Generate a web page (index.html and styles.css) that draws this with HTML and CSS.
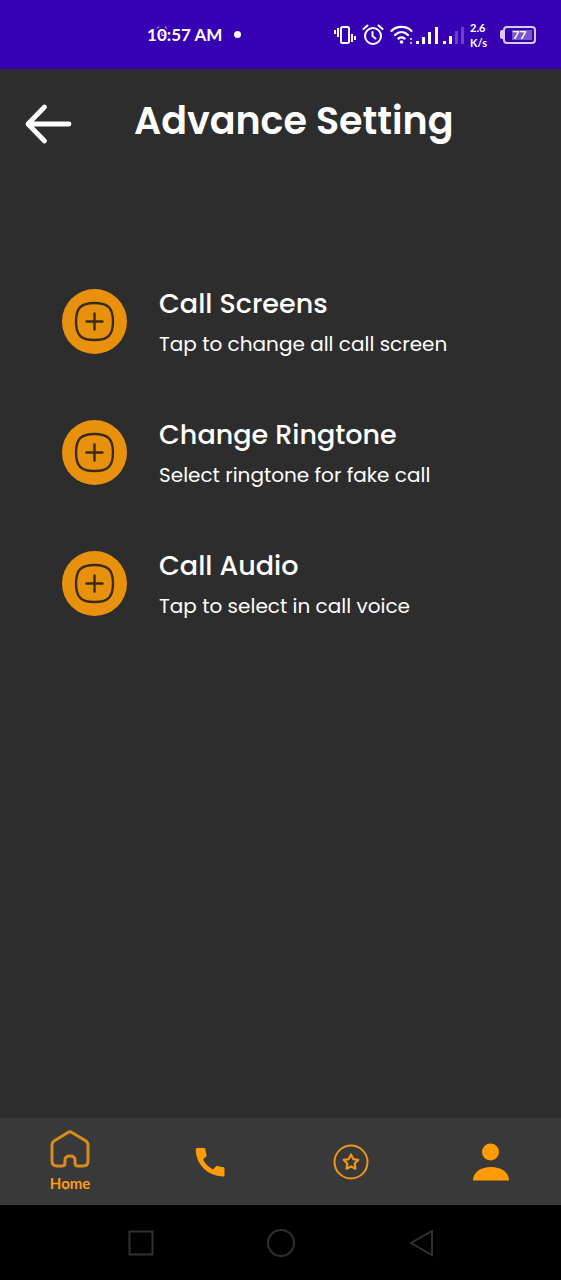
FILE: index.html
```
<!DOCTYPE html>
<html lang="en">
<head>
<meta charset="utf-8">
<meta name="viewport" content="width=device-width, initial-scale=1">
<title>Advance Setting</title>
<link rel="stylesheet" href="styles.css">
</head>
<body>
<div class="status-bar">
  <div class="status-time">
    <span class="clock-text">1<span class="marked">0<svg class="clock-mark" viewBox="0 0 10 20" aria-hidden="true"><path d="M0 4l2-2M10 4L8 2M5 8v3h2"/></svg></span>:57 AM</span>
    <span class="status-dot"></span>
  </div>
  <div class="status-icons">
    <svg width="22" height="20" viewBox="0 0 22 20" aria-hidden="true"><g fill="none" stroke="#fff" stroke-width="2"><rect x="7" y="2" width="8" height="16" rx="1.5"/><path d="M4 3v9M1 5v4M18 9v8M21 11v4"/></g></svg>
    <svg width="22" height="22" viewBox="0 0 22 22" aria-hidden="true"><g fill="none" stroke="#fff" stroke-width="2" stroke-linecap="round"><circle cx="11" cy="12" r="8"/><path d="M1.500 5l4-3.500M20.500 5l-4-3.500M10.500 8v4l3 2.500"/></g></svg>
    <svg class="wifi" width="24" height="20" viewBox="0 0 24 20" aria-hidden="true"><g fill="none" stroke="#fff" stroke-width="2.200" stroke-linecap="round"><path d="M1.500 6c5-5.500 15-5.500 20 0M5 10c4-4 9-4 13 0M8.500 13.500c2-1.500 4-1.500 6 0"/></g><circle cx="11.500" cy="17" r="1.800" fill="#fff"/><path d="M20 13h2v2h-2zM20 17h2v2h-2z" fill="#c3adeb"/></svg>
    <svg width="48" height="18" viewBox="0 0 48 18" aria-hidden="true"><path d="M0 15h3v3H0zM6 11h3v7H6zM12 6h3v12h-3zM19 1h3v17h-3zM27 15h3v3h-3zM33 10h3v8h-3z" fill="#fff"/><path d="M39 5h3v13h-3zM45 1h3v17h-3z" fill="#6c42c8"/></svg>
    <span class="net-speed"><span>2.6</span><span>K/s</span></span>
    <span class="battery"><span class="battery-body"><span class="battery-level">77</span></span></span>
  </div>
</div>

<header class="app-header">
  <button class="back" type="button" aria-label="Back">
    <svg width="48" height="42" viewBox="0 0 48 42" aria-hidden="true"><path d="M20.500 4L4 21l16.500 17M4 21h41" fill="none" stroke="#fff" stroke-width="4.800" stroke-linecap="round" stroke-linejoin="round"/></svg>
  </button>
  <h1>Advance Setting</h1>
</header>

<main class="settings">
  <button class="setting" type="button">
    <svg class="plus" viewBox="0 0 65 65" aria-hidden="true"><circle cx="32.500" cy="32.500" r="32.500"/><path d="M32.500 14C46 14 51 19 51 32.500S46 51 32.500 51 14 46 14 32.500 19 14 32.500 14zM24.500 32.500h16M32.500 24.500v16"/></svg>
    <span class="setting-text"><span class="setting-title">Call Screens</span><span class="setting-note">Tap to change all call screen</span></span>
  </button>
  <button class="setting" type="button">
    <svg class="plus" viewBox="0 0 65 65" aria-hidden="true"><circle cx="32.500" cy="32.500" r="32.500"/><path d="M32.500 14C46 14 51 19 51 32.500S46 51 32.500 51 14 46 14 32.500 19 14 32.500 14zM24.500 32.500h16M32.500 24.500v16"/></svg>
    <span class="setting-text"><span class="setting-title">Change Ringtone</span><span class="setting-note">Select ringtone for fake call</span></span>
  </button>
  <button class="setting" type="button">
    <svg class="plus" viewBox="0 0 65 65" aria-hidden="true"><circle cx="32.500" cy="32.500" r="32.500"/><path d="M32.500 14C46 14 51 19 51 32.500S46 51 32.500 51 14 46 14 32.500 19 14 32.500 14zM24.500 32.500h16M32.500 24.500v16"/></svg>
    <span class="setting-text"><span class="setting-title">Call Audio</span><span class="setting-note">Tap to select in call voice</span></span>
  </button>
</main>

<nav class="tabs">
  <a class="tab" href="#home">
    <svg width="40" height="38" viewBox="0 0 40 38" aria-hidden="true"><path d="M18 2.500L4 11Q2 12.500 2 15v16q0 5 5 5h5q3 0 3-3v-3q0-4 5-4t5 4v3q0 3 3 3h5q5 0 5-5V15q0-2.500-2-4L22 2.500Q20 1.200 18 2.500z" fill="none" stroke="#d98b1c" stroke-width="3" stroke-linejoin="round"/></svg>
    <span class="tab-label">H<span class="marked">o<svg class="o-mark" viewBox="0 0 10 20" aria-hidden="true"><path d="M5 14v4"/></svg></span>me</span>
  </a>
  <a class="tab" href="#calls" aria-label="Calls">
    <svg width="30" height="30" viewBox="0 0 30 30" aria-hidden="true"><path d="M2 1h7q1.300 0 1.500 1.500.2 3 1 5.300.4 1-.4 1.800L8 12.500q3.500 6.500 10 10l3-3.200q.8-.8 1.800-.4 2.300.8 5.200 1 1.500.2 1.500 1.500V28q0 1.500-1.500 1.500Q16.500 29 8.500 21.500 1 13.500.6 2.500.6 1 2 1z" fill="#ff9b05"/></svg>
  </a>
  <a class="tab" href="#favorites" aria-label="Favorites">
    <svg width="36" height="36" viewBox="0 0 36 36" aria-hidden="true"><g fill="none" stroke="#ee961a" stroke-linejoin="round"><circle cx="18" cy="18" r="16.500" stroke-width="2"/><path d="M18 10.500l2.300 4.600 5 .8-3.600 3.600.7 5.200L18 22.500l-4.400 2.200.7-5.200-3.600-3.600 5-.8z" stroke-width="2.200"/></g></svg>
  </a>
  <a class="tab" href="#profile" aria-label="Profile">
    <svg width="36" height="38" viewBox="0 0 36 38" aria-hidden="true"><g fill="#ff9b05"><circle cx="17.500" cy="9" r="8.500"/><path d="M0 37.500C0 29 8 24 18 24s18 5 18 13.500z"/></g></svg>
  </a>
</nav>

<div class="system-bar">
  <button type="button" aria-label="Recent apps"><svg width="26" height="28" viewBox="0 0 26 28" aria-hidden="true"><rect x="1.500" y="2.500" width="23" height="23"/></svg></button>
  <button type="button" aria-label="Home screen"><svg width="28" height="28" viewBox="0 0 28 28" aria-hidden="true"><circle cx="14" cy="14" r="13"/></svg></button>
  <button type="button" aria-label="Previous"><svg width="26" height="28" viewBox="0 0 26 28" aria-hidden="true"><path d="M24 2v24L3 14z"/></svg></button>
</div>
</body>
</html>
```
FILE: styles.css
```
* { box-sizing: border-box; }

body {
  margin: 0;
  min-height: 100vh;
  display: flex;
  flex-direction: column;
  background: #2d2d2d;
  color: #fff;
  font-family: Poppins, Inter, sans-serif;
}

svg { display: block; flex: none; }

button {
  padding: 0;
  border: 0;
  background: none;
  color: inherit;
  font: inherit;
  text-align: left;
}

.status-bar {
  display: flex;
  align-items: center;
  justify-content: space-between;
  height: 69px;
  padding: 0 25px 0 147px;
  background: #3700b3;
  font-family: Lato, sans-serif;
  font-weight: 700;
}

.status-time { display: flex; align-items: center; gap: 12px; }
.clock-text { font-size: 17px; line-height: 24px; white-space: nowrap; }
.status-dot { width: 7px; height: 7px; border-radius: 50%; background: #fff; }

.marked { position: relative; }
.clock-mark, .o-mark {
  position: absolute;
  left: 0;
  top: 0;
  width: 100%;
  height: 100%;
  fill: none;
  stroke: currentColor;
}

.status-icons { display: flex; align-items: center; gap: 6px; }
.wifi { margin-right: -4px; }
.net-speed {
  display: flex;
  flex-direction: column;
  width: 24px;
  font-size: 11px;
  line-height: 15px;
}

.battery { display: flex; align-items: center; }
.battery::before {
  content: "";
  width: 3px;
  height: 9px;
  border-radius: 2px 0 0 2px;
  background: #d9caf3;
}
.battery-body {
  width: 33px;
  height: 18px;
  padding: 2px;
  border: 2px solid #d9caf3;
  border-radius: 4px;
}
.battery-level {
  display: block;
  margin-left: 5px;
  padding-right: 5px;
  background: #7c55ce;
  font-size: 12px;
  line-height: 10px;
  text-align: center;
}

.app-header {
  display: flex;
  align-items: center;
  gap: 62px;
  padding: 24px 24px 0;
}
.back { padding-top: 6px; }
h1 {
  margin: 0;
  font-size: 38px;
  line-height: 56px;
  font-weight: 600;
  white-space: nowrap;
}

.settings {
  flex: 1;
  display: flex;
  flex-direction: column;
  gap: 53px;
  padding: 133px 24px 40px 62px;
}
.setting { display: flex; align-items: center; gap: 32px; height: 78px; }
.plus { width: 65px; height: 65px; }
.plus circle { fill: #e8910c; }
.plus path {
  fill: none;
  stroke: #382c18;
  stroke-width: 2.4;
  stroke-linecap: round;
}
.setting-text { display: flex; flex-direction: column; gap: 2px; padding-top: 2px; }
.setting-title { font-size: 27px; line-height: 42px; font-weight: 500; }
.setting-note { font-size: 20px; line-height: 34px; }

.tabs {
  display: grid;
  grid-template-columns: repeat(4, 1fr);
  height: 87px;
  background: #393939;
}
.tab {
  display: flex;
  flex-direction: column;
  align-items: center;
  justify-content: center;
  gap: 5px;
  color: #ff9b1a;
  text-decoration: none;
}
.tab-label {
  font-family: Lato, sans-serif;
  font-size: 15px;
  line-height: 20px;
  font-weight: 700;
}

.system-bar {
  display: grid;
  grid-template-columns: repeat(3, 140px);
  justify-content: center;
  align-items: center;
  justify-items: center;
  height: 75px;
  background: #000;
}
.system-bar svg { fill: none; stroke: #303030; stroke-width: 2; }
```
